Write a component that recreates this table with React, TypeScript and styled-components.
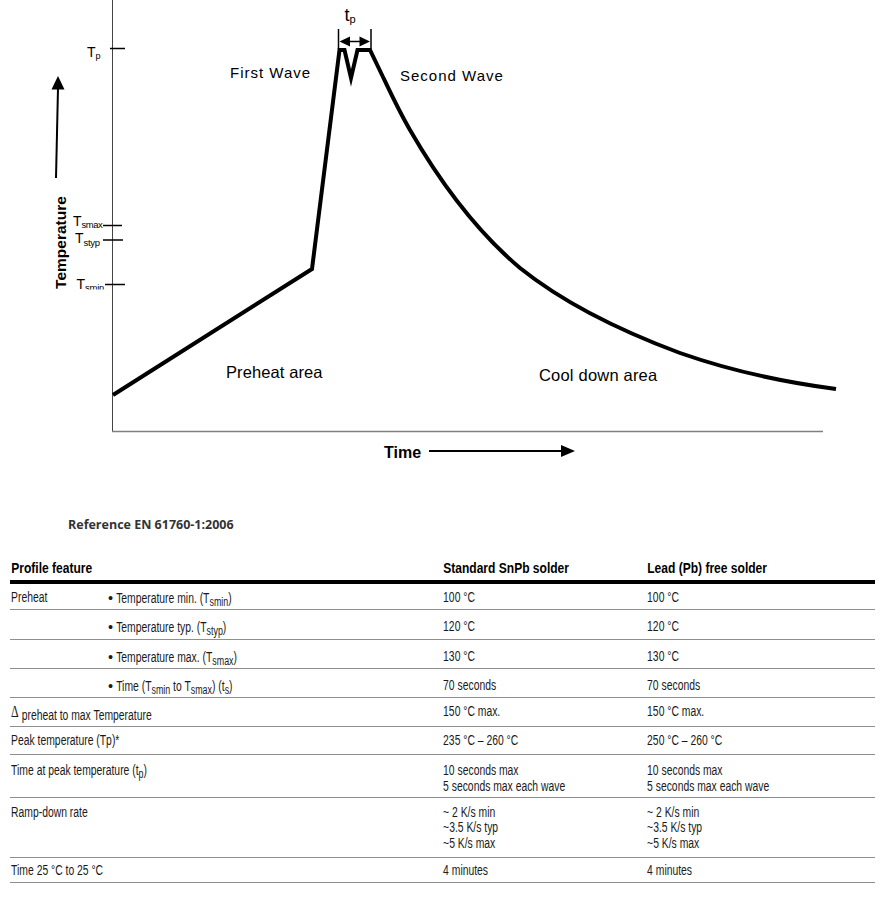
import React from 'react';
import styled, { createGlobalStyle } from 'styled-components';

const GlobalStyle = createGlobalStyle`
  body {
    margin: 0;
    background: #ffffff;
  }
`;

type ProfileRow = {
  label?: React.ReactNode;
  feature?: React.ReactNode;
  wide?: boolean;
  snpb: React.ReactNode;
  leadFree: React.ReactNode;
  height: number;
  pad: number;
};

const Page = styled.div`
  width: 885px;
  color: #1a1a1a;
`;

const ChartSvg = styled.svg`
  display: block;
  width: 885px;
  height: 500px;
`;

const ChartLabel = styled.text<{ $size: number; $bold?: boolean; $spacing?: number }>`
  font-family: 'Liberation Sans', Arial, sans-serif;
  font-size: ${({ $size }) => $size}px;
  font-weight: ${({ $bold }) => ($bold ? 700 : 400)};
  letter-spacing: ${({ $spacing = 0 }) => $spacing}px;
  fill: #000;
`;

const Caption = styled.div`
  margin-top: 17px;
  padding-left: 68px;
  font-family: 'Open Sans', 'Liberation Sans', sans-serif;
  font-size: 12.5px;
  font-weight: 700;
  line-height: 16px;
  color: #333;
`;

const Table = styled.div`
  margin: 27px 0 0 10px;
  width: 865px;
  font-family: 'Liberation Sans', Arial, sans-serif;
`;

const columns = '97px 335px 204px 229px';

const HeaderRow = styled.div`
  display: grid;
  grid-template-columns: ${columns};
  padding-bottom: 4px;
  border-bottom: 4px solid #000;
  font-size: 14.5px;
  font-weight: 700;
  line-height: 16px;
  color: #000;
`;

const Row = styled.div<{ $height: number; $pad: number }>`
  display: grid;
  grid-template-columns: ${columns};
  box-sizing: border-box;
  height: ${({ $height }) => $height}px;
  padding-top: ${({ $pad }) => $pad}px;
  border-bottom: 1px solid #8f8f8f;
  font-size: 14px;
  line-height: 15.5px;
`;

/* the source table is set in a condensed grotesque; squeeze the glyphs horizontally */
const Cell = styled.div<{ $span?: number; $squeeze?: number }>`
  grid-column: span ${({ $span = 1 }) => $span};
  padding-left: 1.5px;
  white-space: nowrap;
  transform: scaleX(${({ $squeeze = 0.74 }) => $squeeze});
  transform-origin: 0 0;
`;

const Sub = styled.sub`
  font-size: 12px;
  line-height: 0;
  vertical-align: -3px;
`;

const Bullet = styled.span`
  display: inline-block;
  font-size: 15px;
  transform: scaleX(1.3);
  margin-right: 2px;
`;

const Delta = styled.span`
  font-family: 'Liberation Serif', serif;
  font-size: 16px;
  margin-right: 4px;
`;

const Lowered = styled.span`
  vertical-align: -3px;
`;

const rows: ProfileRow[] = [
  {
    label: 'Preheat',
    feature: (
      <>
        <Bullet>•</Bullet> Temperature min. (T<Sub>smin</Sub>)
      </>
    ),
    snpb: '100 °C',
    leadFree: '100 °C',
    height: 26,
    pad: 6,
  },
  {
    feature: (
      <>
        <Bullet>•</Bullet> Temperature typ. (T<Sub>styp</Sub>)
      </>
    ),
    snpb: '120 °C',
    leadFree: '120 °C',
    height: 30,
    pad: 9,
  },
  {
    feature: (
      <>
        <Bullet>•</Bullet> Temperature max. (T<Sub>smax</Sub>)
      </>
    ),
    snpb: '130 °C',
    leadFree: '130 °C',
    height: 29,
    pad: 9,
  },
  {
    feature: (
      <>
        <Bullet>•</Bullet> Time (T<Sub>smin</Sub> to T<Sub>smax</Sub>) (t<Sub>s</Sub>)
      </>
    ),
    snpb: '70 seconds',
    leadFree: '70 seconds',
    height: 29,
    pad: 9,
  },
  {
    label: (
      <>
        <Delta>Δ</Delta>
        <Lowered>preheat to max Temperature</Lowered>
      </>
    ),
    wide: true,
    snpb: '150 °C max.',
    leadFree: '150 °C max.',
    height: 29,
    pad: 6,
  },
  {
    label: 'Peak temperature (Tp)*',
    wide: true,
    snpb: '235 °C – 260 °C',
    leadFree: '250 °C – 260 °C',
    height: 28,
    pad: 6,
  },
  {
    label: (
      <>
        Time at peak temperature (t<Sub>p</Sub>)
      </>
    ),
    wide: true,
    snpb: (
      <>
        10 seconds max
        <br />5 seconds max each wave
      </>
    ),
    leadFree: (
      <>
        10 seconds max
        <br />5 seconds max each wave
      </>
    ),
    height: 43,
    pad: 8,
  },
  {
    label: 'Ramp-down rate',
    wide: true,
    snpb: (
      <>
        ~ 2 K/s min
        <br />
        ~3.5 K/s typ
        <br />
        ~5 K/s max
      </>
    ),
    leadFree: (
      <>
        ~ 2 K/s min
        <br />
        ~3.5 K/s typ
        <br />
        ~5 K/s max
      </>
    ),
    height: 60,
    pad: 6.5,
  },
  {
    label: 'Time 25 °C to 25 °C',
    wide: true,
    snpb: '4 minutes',
    leadFree: '4 minutes',
    height: 25,
    pad: 5,
  },
];

const ReflowChart: React.FC = () => (
  <ChartSvg viewBox="0 0 885 500">
    <defs>
      <clipPath id="tsmin-clip">
        <rect x="60" y="260" width="60" height="29.5" />
      </clipPath>
    </defs>

    {/* axes */}
    <line x1="112.5" y1="0" x2="112.5" y2="432" stroke="#444" strokeWidth="1" />
    <line x1="112" y1="431.5" x2="823" y2="431.5" stroke="#808080" strokeWidth="1.5" />

    {/* ticks */}
    <line x1="110" y1="48.5" x2="125" y2="48.5" stroke="#000" strokeWidth="1.5" />
    <line x1="103" y1="225.5" x2="122" y2="225.5" stroke="#000" strokeWidth="1.5" />
    <line x1="103" y1="240" x2="123" y2="240" stroke="#000" strokeWidth="1.5" />
    <line x1="105" y1="284.5" x2="125" y2="284.5" stroke="#000" strokeWidth="1.5" />

    <ChartLabel $size={14} x="87" y="56.7">
      T
      <tspan fontSize="9" dy="2">
        p
      </tspan>
    </ChartLabel>
    <ChartLabel $size={14} x="73" y="225.7">
      T
      <tspan fontSize="9.5" dy="2.6" letterSpacing="-0.5">
        smax
      </tspan>
    </ChartLabel>
    <ChartLabel $size={14} x="75" y="243.3">
      T
      <tspan fontSize="9.5" dy="2.6" letterSpacing="-0.3">
        styp
      </tspan>
    </ChartLabel>
    <g clipPath="url(#tsmin-clip)">
      <ChartLabel $size={14} x="76.5" y="288.5">
        T
        <tspan fontSize="9.5" dy="2.6" letterSpacing="-0.3">
          smin
        </tspan>
      </ChartLabel>
    </g>

    {/* temperature arrow */}
    <line x1="56" y1="178" x2="58" y2="88" stroke="#000" strokeWidth="2" />
    <polygon points="58,76 51.5,89.5 64.5,89.5" fill="#000" />
    <ChartLabel $size={15.5} $bold x="60" y="248" textAnchor="middle" transform="rotate(-90 60 242.5)">
      Temperature
    </ChartLabel>

    {/* tp bracket */}
    <line x1="338.5" y1="29" x2="338.5" y2="49" stroke="#000" strokeWidth="1.5" />
    <line x1="371" y1="29" x2="371" y2="49" stroke="#000" strokeWidth="1.5" />
    <line x1="346" y1="41.5" x2="363" y2="41.5" stroke="#000" strokeWidth="1.5" />
    <polygon points="339.5,41.5 350,36.5 350,46.5" fill="#000" />
    <polygon points="370,41.5 359.5,36.5 359.5,46.5" fill="#000" />
    <ChartLabel $size={18} x="344.5" y="20.5">
      t
      <tspan fontSize="11" dy="2.5">
        p
      </tspan>
    </ChartLabel>

    {/* profile curve */}
    <path
      d="M113,395 L312,269 L339.5,50 L344.5,50 L351,78 L357.5,50 L370,50 L383,77 C392,96 400,113 410,130 C440,182 475,230 520,268 C560,300 610,327 680,353 C740,374 790,383 836,389"
      fill="none"
      stroke="#000"
      strokeWidth="4"
      strokeLinejoin="miter"
      strokeMiterlimit="6"
    />

    <ChartLabel $size={15} $spacing={1} x="230" y="77.5">
      First Wave
    </ChartLabel>
    <ChartLabel $size={15} $spacing={1} x="400" y="80.5">
      Second Wave
    </ChartLabel>
    <ChartLabel $size={16.5} $spacing={0.1} x="226" y="378">
      Preheat area
    </ChartLabel>
    <ChartLabel $size={16.5} $spacing={0.2} x="539" y="381">
      Cool down area
    </ChartLabel>

    {/* time arrow */}
    <ChartLabel $size={16} $bold x="384" y="458">
      Time
    </ChartLabel>
    <line x1="429" y1="451" x2="563" y2="451" stroke="#000" strokeWidth="2" />
    <polygon points="561,445 575,451 561,457" fill="#000" />
  </ChartSvg>
);

const App: React.FC = () => (
  <Page>
    <GlobalStyle />
    <ReflowChart />
    <Caption>Reference EN 61760-1:2006</Caption>
    <Table>
      <HeaderRow>
        <Cell $span={2} $squeeze={0.83}>
          Profile feature
        </Cell>
        <Cell $squeeze={0.83}>Standard SnPb solder</Cell>
        <Cell $squeeze={0.83}>Lead (Pb) free solder</Cell>
      </HeaderRow>
      {rows.map((row, index) => (
        <Row key={index} $height={row.height} $pad={row.pad}>
          {row.wide ? (
            <Cell $span={2}>{row.label}</Cell>
          ) : (
            <>
              <Cell>{row.label}</Cell>
              <Cell>{row.feature}</Cell>
            </>
          )}
          <Cell>{row.snpb}</Cell>
          <Cell>{row.leadFree}</Cell>
        </Row>
      ))}
    </Table>
  </Page>
);

export default App;
